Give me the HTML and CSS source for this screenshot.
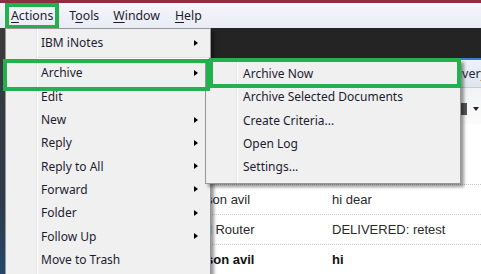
FILE: index.html
```html
<!DOCTYPE html>
<html>
<head>
<meta charset="utf-8">
<link rel="stylesheet" href="styles.css">
</head>
<body>
<div class="screen">
  <div class="titlestrip"></div>
  <div class="menubar">
    <span class="mb-item mb-actions"><u>A</u>ctions</span>
    <span class="mb-item mb-tools">T<u>o</u>ols</span>
    <span class="mb-item mb-window"><u>W</u>indow</span>
    <span class="mb-item mb-help"><u>H</u>elp</span>
  </div>
  <div class="app">
    <div class="leftstrip"></div>
    <div class="main">
      <div class="darkband"></div>
      <div class="tabband"><span class="tabtext">Delivery</span></div>
      <div class="toolbar">
        <span class="tb-icon"></span>
        <span class="tb-arrow"></span>
      </div>
      <div class="blank"></div>
      <div class="list">
        <div class="row"><span class="c-pad"></span><span class="c-who">Mason avil</span><span class="c-sub">hi dear</span></div>
        <div class="row"><span class="c-pad"></span><span class="c-who">Mail Router</span><span class="c-sub">DELIVERED: retest</span></div>
        <div class="row unread"><span class="c-pad"></span><span class="c-who">Mason avil</span><span class="c-sub">hi</span></div>
      </div>
    </div>
  </div>

  <div class="menu menu-main">
    <div class="mi"><span class="mi-label">IBM iNotes</span><span class="arrow"></span></div>
    <div class="sep"></div>
    <div class="mi"><span class="mi-label">Archive</span><span class="arrow"></span></div>
    <div class="mi"><span class="mi-label">Edit</span></div>
    <div class="mi"><span class="mi-label">New</span><span class="arrow"></span></div>
    <div class="mi"><span class="mi-label">Reply</span><span class="arrow"></span></div>
    <div class="mi"><span class="mi-label">Reply to All</span><span class="arrow"></span></div>
    <div class="mi"><span class="mi-label">Forward</span><span class="arrow"></span></div>
    <div class="mi"><span class="mi-label">Folder</span><span class="arrow"></span></div>
    <div class="mi"><span class="mi-label">Follow Up</span><span class="arrow"></span></div>
    <div class="mi"><span class="mi-label">Move to Trash</span></div>
  </div>

  <div class="menu menu-sub">
    <div class="mi"><span class="mi-label">Archive Now</span></div>
    <div class="mi"><span class="mi-label">Archive Selected Documents</span></div>
    <div class="mi"><span class="mi-label">Create Criteria...</span></div>
    <div class="mi"><span class="mi-label">Open Log</span></div>
    <div class="mi"><span class="mi-label">Settings...</span></div>
  </div>

  <div class="mark mark-archive"></div>
  <div class="mark mark-now"></div>
</div>
</body>
</html>
```

FILE: styles.css
```css
html, body {
  margin: 0;
  padding: 0;
}
body {
  width: 481px;
  height: 274px;
  overflow: hidden;
  background: #ffffff;
}
.screen {
  position: relative;
  width: 481px;
  height: 274px;
  overflow: hidden;
  font-family: "Noto Sans", "DejaVu Sans", sans-serif;
}
.titlestrip {
  height: 3px;
  background: #8a3040;
}
.menubar {
  height: 25px;
  display: flex;
  align-items: flex-start;
  padding-left: 5px;
  background: linear-gradient(#f5f6fb, #e9ecf4);
  font-size: 12.3px;
  color: #1c1c30;
  position: relative;
  z-index: 3;
}
.mb-item {
  line-height: 25px;
  white-space: nowrap;
}
.mb-item u {
  text-decoration-thickness: 1px;
  text-underline-offset: 2px;
}
.mb-actions {
  box-sizing: border-box;
  height: 26px;
  border: 4px solid #22b14c;
  padding: 0 2px;
  line-height: 18px;
}
.mb-tools { margin-left: 10px; }
.mb-window { margin-left: 14px; }
.mb-help { margin-left: 15px; }

.app {
  display: flex;
  height: 246px;
}
.leftstrip {
  width: 5px;
  flex: none;
  background: linear-gradient(#3a3a3a, #2e3a4a 70%, #25476a);
}
.main {
  flex: 1;
  display: flex;
  flex-direction: column;
}
.darkband {
  height: 30px;
  background: #242424;
}
.tabband {
  height: 28px;
  border-top: 2px solid #3b7dd0;
  background: linear-gradient(#eef3f9, #dde5ee);
  display: flex;
  justify-content: flex-end;
  align-items: center;
  font-size: 12.5px;
  color: #2a2a3a;
  overflow: hidden;
}
.tabtext {
  margin-right: -6px;
  white-space: nowrap;
}
.toolbar {
  height: 36px;
  border-top: 1px solid #c8ccd2;
  background: linear-gradient(#f2f3f5, #fbfbfb);
  display: flex;
  justify-content: flex-end;
  align-items: center;
  gap: 6px;
  padding-right: 2px;
}
.tb-icon {
  width: 6px;
  height: 12px;
  background: #555;
  margin-top: 6px;
}
.tb-arrow {
  width: 0;
  height: 0;
  border-left: 3px solid transparent;
  border-right: 3px solid transparent;
  border-top: 4px solid #222;
  margin-top: 6px;
}
.blank {
  height: 61px;
  background: #fff;
}
.list {
  font-family: "Liberation Sans", Arial, sans-serif;
  font-size: 13px;
  color: #2a2a2a;
}
.row {
  display: grid;
  grid-template-columns: 183px 144px 1fr;
  height: 30px;
  line-height: 30px;
  border-top: 1px dotted #c9c9c9;
  box-sizing: border-box;
  white-space: nowrap;
}
.row.unread {
  font-weight: bold;
  color: #111;
}

/* menus */
.menu {
  position: absolute;
  box-sizing: border-box;
  border: 1px solid #979797;
  background: linear-gradient(to right, #f0f0f0 0 30px, #e2e3e3 30px 31px, #ffffff 31px 32px, #f0f0f0 32px);
  box-shadow: 3px 3px 3px rgba(0, 0, 0, 0.4);
  font-size: 12px;
  color: #1c1c30;
  padding-top: 2px;
  z-index: 5;
}
.menu-main {
  left: 5px;
  top: 28px;
  width: 206px;
  height: 260px;
}
.menu-sub {
  left: 205px;
  top: 59px;
  width: 256px;
  padding-bottom: 5px;
  z-index: 6;
}
.mi {
  height: 23.3px;
  display: flex;
  align-items: center;
  white-space: nowrap;
}
.menu-main .mi { padding-left: 35px; }
.menu-sub .mi { padding-left: 37px; }
.arrow {
  margin-left: auto;
  margin-right: 12px;
  width: 0;
  height: 0;
  border-left: 4px solid #000;
  border-top: 3.5px solid transparent;
  border-bottom: 3.5px solid transparent;
}
.sep {
  height: 7px;
  margin-left: 32px;
  background: linear-gradient(#f0f0f0 0 3px, #e0e0e0 3px 4px, #ffffff 4px 5px, #f0f0f0 5px);
}

/* green annotation boxes */
.mark {
  position: absolute;
  box-sizing: border-box;
  border: 4px solid #22b14c;
  z-index: 8;
}
.mark-archive {
  left: 3px;
  top: 59px;
  width: 207px;
  height: 32px;
}
.mark-now {
  left: 209px;
  top: 58px;
  width: 252px;
  height: 30px;
}
```
